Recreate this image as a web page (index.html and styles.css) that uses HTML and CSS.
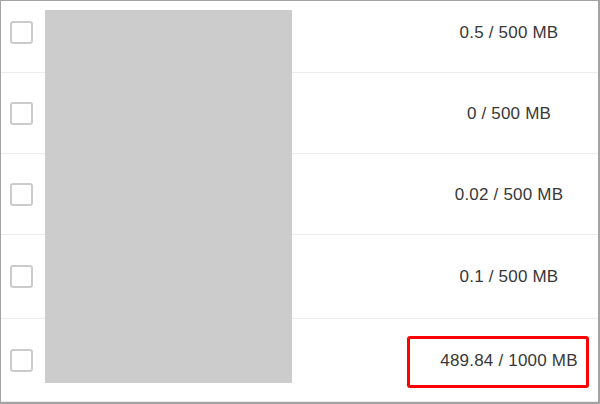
FILE: index.html
```html
<!DOCTYPE html>
<html>
<head>
<meta charset="utf-8">
<link rel="stylesheet" href="styles.css">
</head>
<body>
<div class="table">
  <div class="rows">
    <div class="row"><span class="check"></span><span class="name"></span><span class="size">0.5 / 500 MB</span></div>
    <div class="row"><span class="check"></span><span class="name"></span><span class="size">0 / 500 MB</span></div>
    <div class="row"><span class="check"></span><span class="name"></span><span class="size">0.02 / 500 MB</span></div>
    <div class="row tall"><span class="check"></span><span class="name"></span><span class="size">0.1 / 500 MB</span></div>
    <div class="row last"><span class="check"></span><span class="name"></span><span class="size">489.84 / 1000 MB</span></div>
  </div>
  <div class="redact"></div>
  <div class="highlight"></div>
</div>
</body>
</html>
```
FILE: styles.css
```css
html, body {
  margin: 0;
  padding: 0;
  background: #fff;
}
.table {
  position: relative;
  width: 600px;
  height: 404px;
  box-sizing: border-box;
  border: 1px solid #a3a3a3;
  border-right-width: 2px;
  border-bottom-width: 2px;
  overflow: hidden;
  font-family: "Liberation Sans", Arial, sans-serif;
  font-size: 17px;
  letter-spacing: 0.2px;
  color: #383838;
}
.rows {
  margin-top: -9px;
}
.row {
  display: grid;
  grid-template-columns: 44px 1fr 176px;
  align-items: center;
  height: 81px;
  box-sizing: border-box;
  border-bottom: 1px solid #ececec;
  padding-left: 9px;
  padding-right: 1px;
}
.row.tall { height: 84px; }
.row.last { height: 83px; }
.check {
  width: 23px;
  height: 23px;
  box-sizing: border-box;
  border: 2px solid #cbcbcb;
  border-radius: 3px;
  background: #fff;
}
.size {
  text-align: center;
  white-space: nowrap;
  padding-top: 1px;
}
.redact {
  position: absolute;
  left: 44px;
  top: 9px;
  width: 247px;
  height: 373px;
  background: #cccccc;
}
.highlight {
  position: absolute;
  left: 406px;
  top: 335px;
  width: 182px;
  height: 52px;
  box-sizing: border-box;
  border: 3px solid #ff0000;
  border-radius: 3px;
}
```
